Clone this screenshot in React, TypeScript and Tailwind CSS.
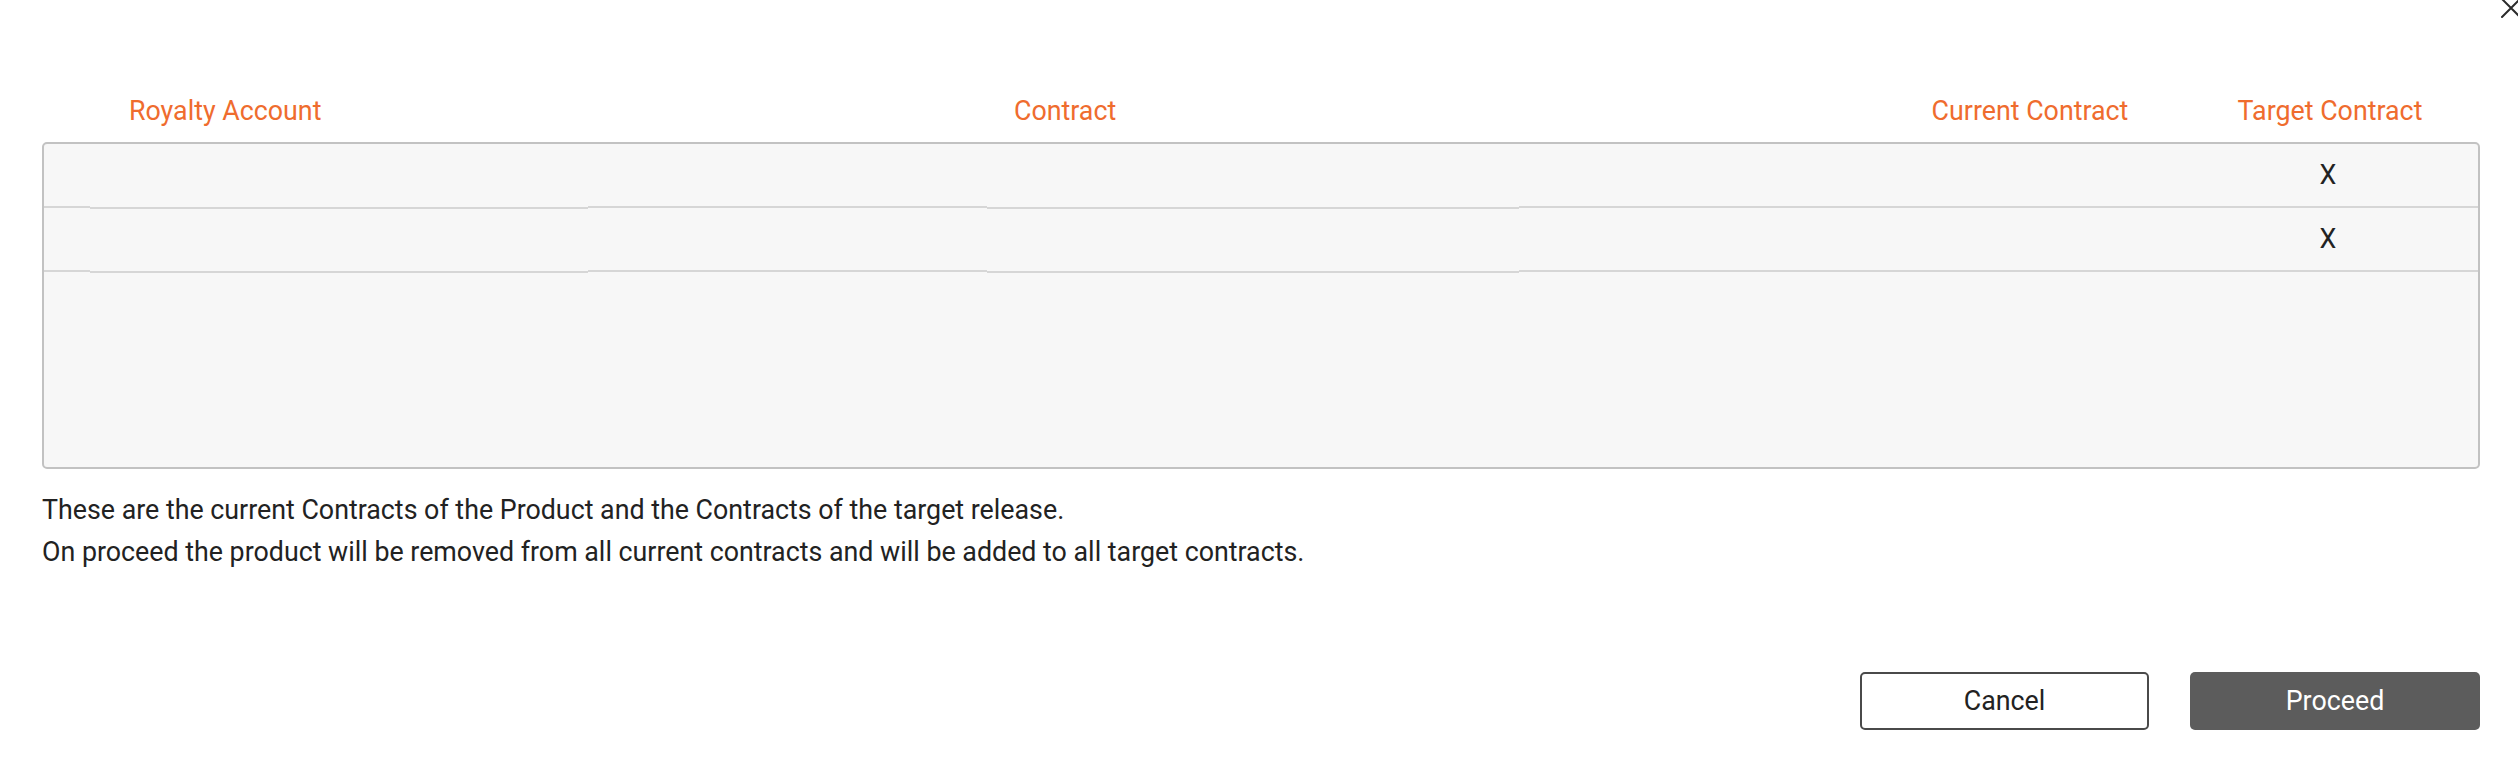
import React from "react";

const rows = [{ target: "X" }, { target: "X" }];

function CloseIcon() {
  return (
    <svg width="24" height="24" viewBox="0 0 24 24" className="absolute right-[-5px] top-[-4px]" fill="none">
      <path d="M3 3 L21 21 M21 3 L3 21" stroke="#2b2b2b" strokeWidth="2" strokeLinecap="round" />
    </svg>
  );
}

function Row({ target }: { target: string }) {
  const cell = "h-[64px] border-b-2 border-[#d6d6d6]";
  return (
    <div className="flex">
      <div className={`${cell} w-[46px]`} />
      <div className={`${cell} w-[498px] translate-y-[1px]`} />
      <div className={`${cell} w-[399px]`} />
      <div className={`${cell} w-[532px] translate-y-[1px]`} />
      <div className={`${cell} flex-1`} />
      <div className={`${cell} w-[300px] flex items-center justify-center text-[#222222]`}>{target}</div>
    </div>
  );
}

export default function App() {
  return (
    <div className="relative w-[2518px] h-[760px] overflow-hidden bg-white font-['Roboto',sans-serif] text-[26.8px]">
      <CloseIcon />
      <div className="pl-[42px] pr-[38px] pt-[92px]">
        {/* column headings */}
        <div className="flex h-[38px] leading-[38px] mb-[12px] text-[#ef6c2e]">
          <div className="w-[87px]" />
          <div className="w-[885px]">Royalty Account</div>
          <div className="flex-1">Contract</div>
          <div className="w-[300px] text-center">Current Contract</div>
          <div className="w-[300px] text-center">Target Contract</div>
        </div>

        {/* contracts table */}
        <div className="h-[327px] border-2 border-[#c2c2c2] rounded-[5px] bg-[#f7f7f7] overflow-hidden">
          {rows.map((r, i) => (
            <Row key={i} target={r.target} />
          ))}
        </div>

        <div className="mt-[21px] leading-[41.5px] text-[#222222]">
          <p>These are the current Contracts of the Product and the Contracts of the target release.</p>
          <p>On proceed the product will be removed from all current contracts and will be added to all target contracts.</p>
        </div>

        <div className="mt-[99px] flex justify-end gap-[41px]">
          <button className="w-[289px] h-[58px] rounded-[5px] border-2 border-[#4a4a4a] bg-white text-[#222222]">
            Cancel
          </button>
          <button className="w-[290px] h-[58px] rounded-[5px] bg-[#5c5c5c] text-white">Proceed</button>
        </div>
      </div>
    </div>
  );
}
